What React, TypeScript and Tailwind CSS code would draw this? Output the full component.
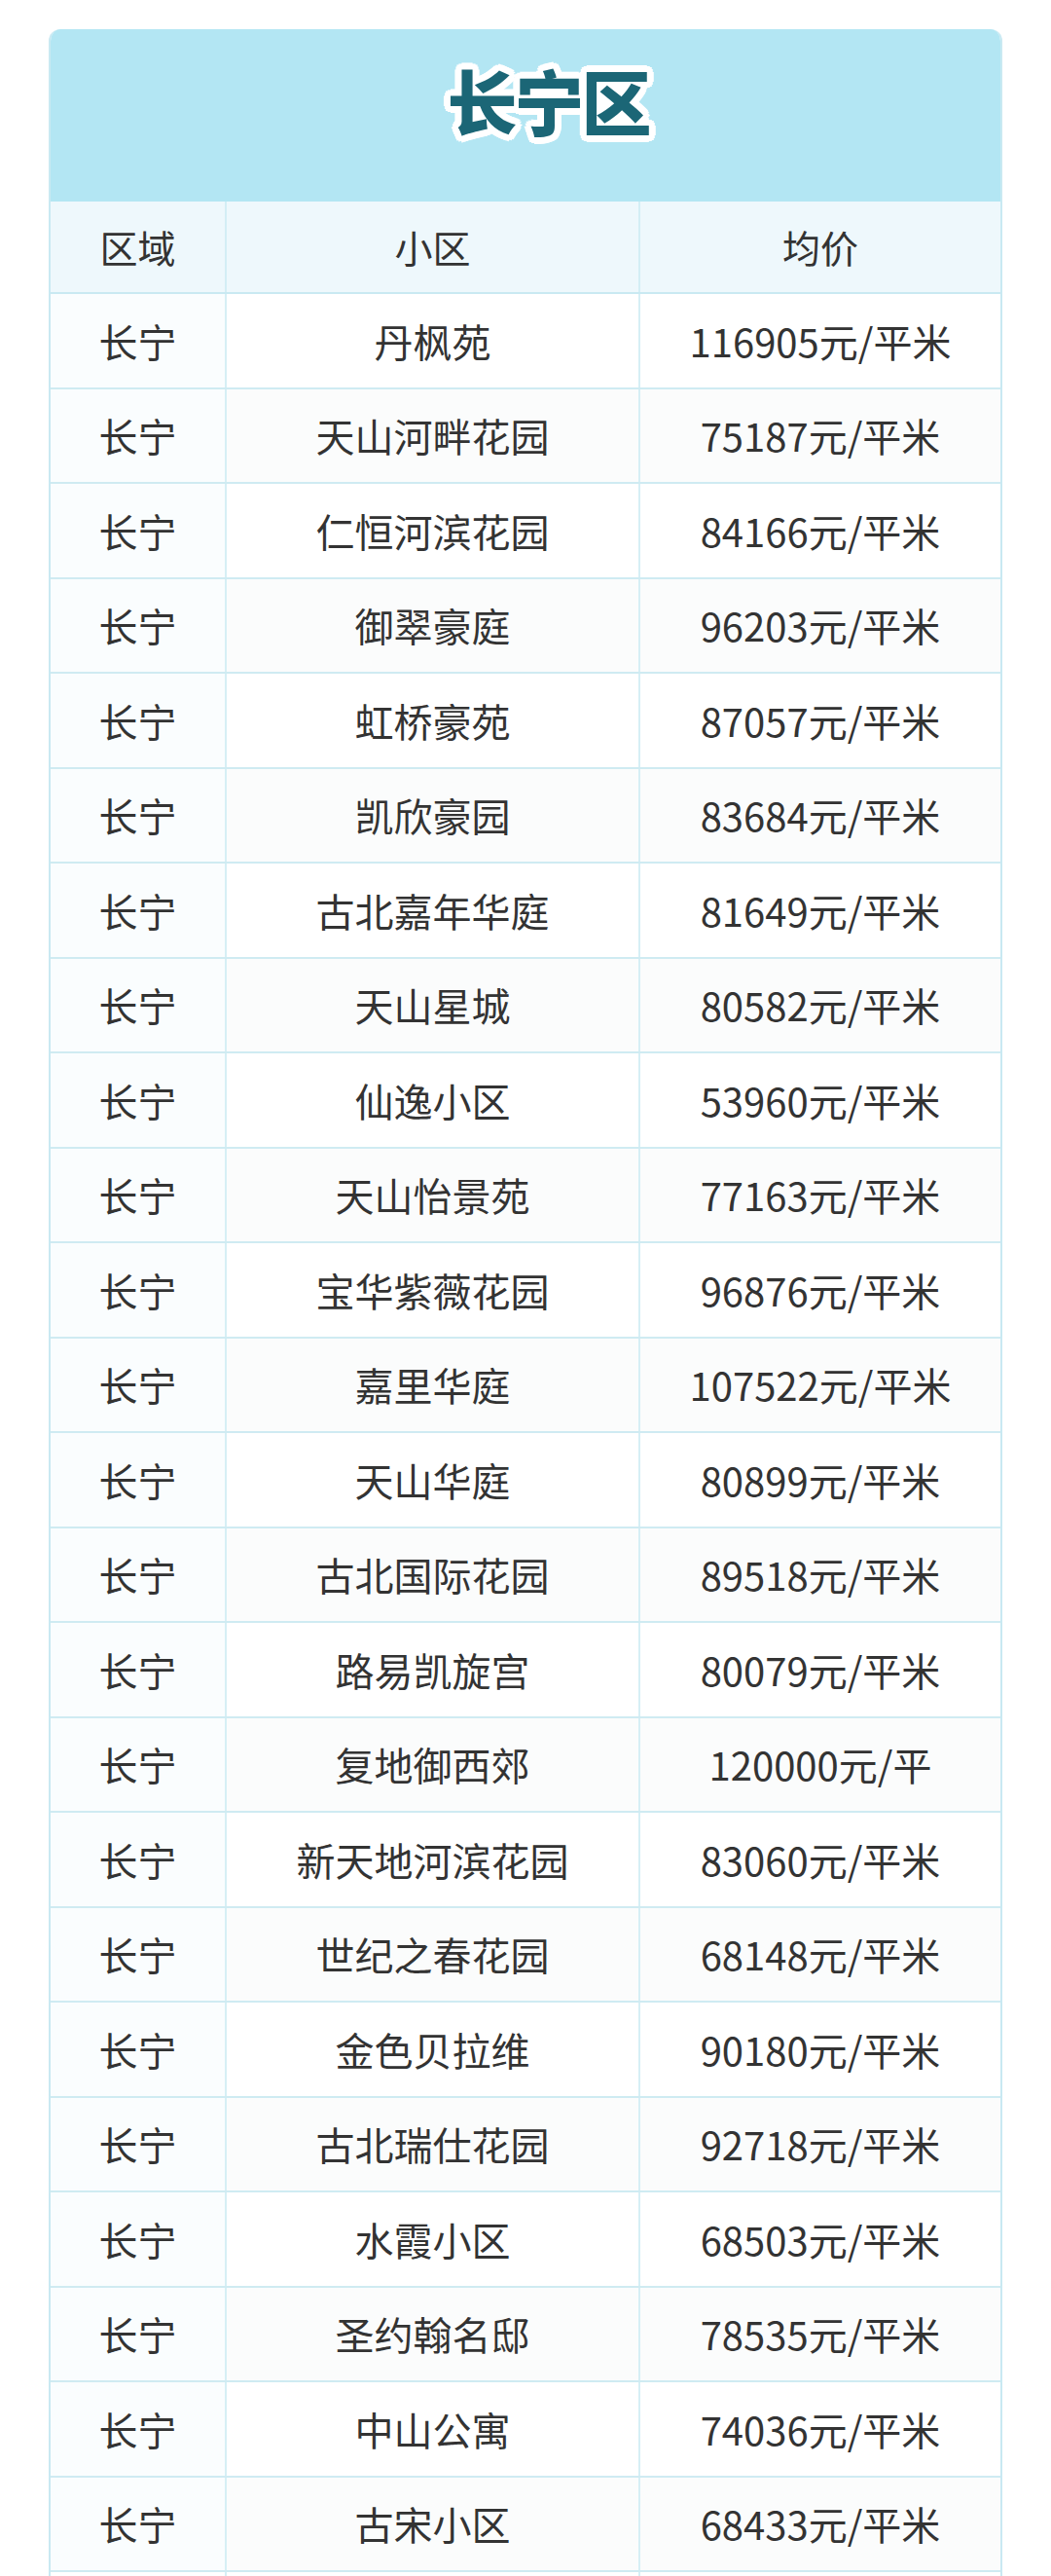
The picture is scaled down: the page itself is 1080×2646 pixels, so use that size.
import React from 'react';

// 长宁区 小区均价表
const rows: [string, string][] = [
  ['丹枫苑', '116905元/平米'],
  ['天山河畔花园', '75187元/平米'],
  ['仁恒河滨花园', '84166元/平米'],
  ['御翠豪庭', '96203元/平米'],
  ['虹桥豪苑', '87057元/平米'],
  ['凯欣豪园', '83684元/平米'],
  ['古北嘉年华庭', '81649元/平米'],
  ['天山星城', '80582元/平米'],
  ['仙逸小区', '53960元/平米'],
  ['天山怡景苑', '77163元/平米'],
  ['宝华紫薇花园', '96876元/平米'],
  ['嘉里华庭', '107522元/平米'],
  ['天山华庭', '80899元/平米'],
  ['古北国际花园', '89518元/平米'],
  ['路易凯旋宫', '80079元/平米'],
  ['复地御西郊', '120000元/平'],
  ['新天地河滨花园', '83060元/平米'],
  ['世纪之春花园', '68148元/平米'],
  ['金色贝拉维', '90180元/平米'],
  ['古北瑞仕花园', '92718元/平米'],
  ['水霞小区', '68503元/平米'],
  ['圣约翰名邸', '78535元/平米'],
  ['中山公寓', '74036元/平米'],
  ['古宋小区', '68433元/平米'],
];

const App: React.FC = () => {
  return (
    <div className="w-[1080px] min-h-[2646px] bg-white pt-[30px] pl-[50px] font-['Noto_Sans_CJK_SC','Noto_Sans',sans-serif]">
      <div className="w-[980px] rounded-t-[12px] overflow-hidden border-x-2 border-[#c9e9f2]">
        {/* title band */}
        <div className="h-[177px] bg-[#b3e6f3] flex justify-center pt-[36px] pl-[46px]">
          <h1 className="text-[72px] leading-none font-black text-[#1b6676] tracking-[-3px] [text-shadow:7px_0_0_#fff,-7px_0_0_#fff,0_7px_0_#fff,0_-7px_0_#fff,5px_5px_0_#fff,-5px_5px_0_#fff,5px_-5px_0_#fff,-5px_-5px_0_#fff,6px_3px_0_#fff,-6px_3px_0_#fff,6px_-3px_0_#fff,-6px_-3px_0_#fff,3px_6px_0_#fff,-3px_6px_0_#fff,3px_-6px_0_#fff,-3px_-6px_0_#fff]">
            长宁区
          </h1>
        </div>

        {/* column header */}
        <div className="grid grid-cols-[181px_425px_1fr] h-[95px] bg-[#eef8fc] border-b-2 border-[#c9e9f2] text-[39px] text-[#333]">
          <div className="flex items-center justify-center border-r-2 border-[#d3eef5]">区域</div>
          <div className="flex items-center justify-center border-r-2 border-[#d3eef5]">小区</div>
          <div className="flex items-center justify-center">均价</div>
        </div>

        {rows.map(([name, price], i) => (
          <div
            key={name}
            className={`grid grid-cols-[181px_425px_1fr] h-[97.5px] border-b-2 border-[#cfebf2] text-[40px] text-[#333] ${
              i % 2 === 0 ? 'bg-white' : 'bg-[#fbfcfc]'
            }`}
          >
            <div className="flex items-center justify-center border-r-2 border-[#d6eff5] bg-[#fafdfe]">长宁</div>
            <div className="flex items-center justify-center border-r-2 border-[#d6eff5]">{name}</div>
            <div className="flex items-center justify-center">{price}</div>
          </div>
        ))}

        <div className="grid grid-cols-[181px_425px_1fr] h-[97px] bg-white">
          <div className="border-r-2 border-[#d6eff5]" />
          <div className="border-r-2 border-[#d6eff5]" />
          <div />
        </div>
      </div>
    </div>
  );
};

export default App;
